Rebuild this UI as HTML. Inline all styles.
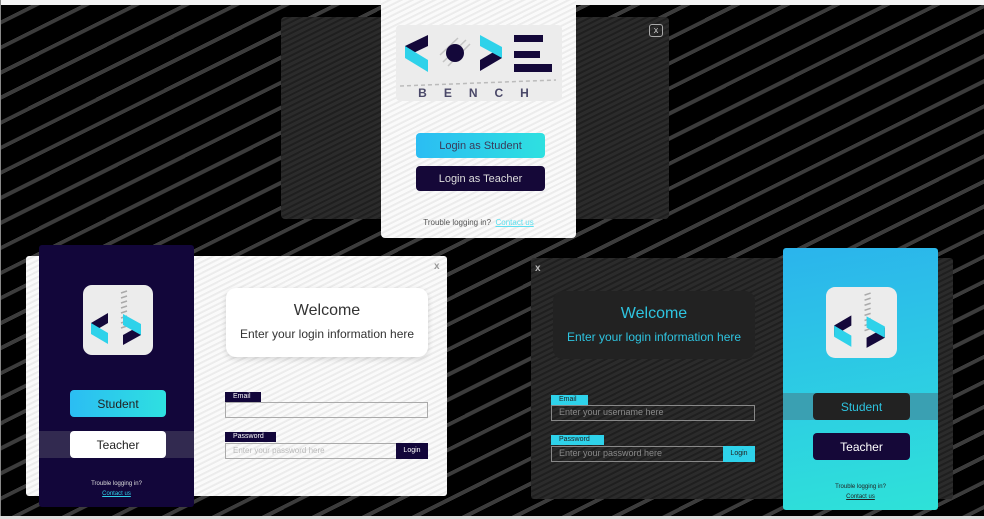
<!DOCTYPE html>
<html><head><meta charset="utf-8"><style>
*{margin:0;padding:0;box-sizing:border-box}
body{width:984px;height:519px;overflow:hidden;position:relative;font-family:"Liberation Sans",sans-serif;
background:repeating-linear-gradient(153.4deg,#000 0,#000 18.5px,#3c3c3c 18.5px,#3c3c3c 22.4px);}
.abs{position:absolute}
.dk{background:repeating-linear-gradient(153.4deg,#2b2b2b 0,#2b2b2b 3px,#1f1f1f 3px,#1f1f1f 5px)}
.wt{background:repeating-linear-gradient(153.4deg,#fafafa 0,#fafafa 3px,#ececec 3px,#ececec 5px)}
.btn{position:absolute;border-radius:4px;display:flex;align-items:center;justify-content:center;font-size:12px}
.c{text-align:center}
</style></head><body>
<div class="abs" style="left:0;top:0;width:984px;height:5px;background:#f4f4f4"></div>
<div class="abs" style="left:0;top:0;width:1px;height:519px;background:#888"></div>
<div class="abs" style="left:0;top:516px;width:984px;height:3px;background:#ddd"></div>

<!-- panel 1 -->
<div class="abs dk" style="left:281px;top:17px;width:388px;height:202px;border-radius:4px"></div>
<div class="abs" style="left:649px;top:24px;width:14px;height:13px;border:1px solid #aaa;border-radius:3px;color:#ccc;font-size:9px;text-align:center;line-height:11px">x</div>
<div class="abs wt" style="left:381px;top:0;width:195px;height:238px;border-radius:0 0 4px 4px"></div>
<svg class="abs" style="left:396px;top:25px" width="166" height="76" viewBox="396 25 166 76">
<rect x="396" y="25" width="166" height="76" rx="4" fill="#ececec"/>
<g stroke="#c4c4c4" stroke-width="1.5"><line x1="443" y1="62" x2="466" y2="40"/><line x1="448" y1="66" x2="470" y2="44"/><line x1="440" y1="55" x2="458" y2="38"/></g>
<polygon points="405,46 428,35 428,46 405,57" fill="#14083a"/>
<polygon points="405,46 428,60 428,72 405,58" fill="#2ed2ea"/>
<circle cx="455" cy="53" r="9" fill="#14083a"/>
<polygon points="480,60 502,47 502,58 480,71" fill="#14083a"/>
<polygon points="480,35 502,47 502,58 480,46" fill="#2ed2ea"/>
<rect x="514" y="35" width="29" height="7" fill="#14083a"/>
<rect x="514" y="51" width="26" height="7" fill="#14083a"/>
<rect x="514" y="64" width="38" height="8" fill="#14083a"/>
<g stroke="#bbb" stroke-width="1.5" stroke-dasharray="4 3"><line x1="400" y1="86" x2="556" y2="80"/></g>
<text x="482" y="97" text-anchor="middle" font-size="12" font-weight="bold" fill="#4a4868" letter-spacing="17" font-family="Liberation Sans">BENCH</text>
</svg>
<div class="btn" style="left:416px;top:133px;width:129px;height:25px;background:linear-gradient(90deg,#2bbdf3,#2ee0e0);color:#3a3a5a;font-size:11px">Login as Student</div>
<div class="btn" style="left:416px;top:166px;width:129px;height:25px;background:#150838;color:#ddd;font-size:11px">Login as Teacher</div>
<div class="abs" style="left:381px;top:218px;width:195px;font-size:8px;color:#555;text-align:center">Trouble logging in? &nbsp;<span style="color:#5ce0f0;text-decoration:underline">Contact us</span></div>

<!-- panel 2 -->
<div class="abs wt" style="left:26px;top:256px;width:421px;height:240px;border-radius:3px"></div>
<div class="abs" style="left:434px;top:261px;font-size:10px;color:#999;font-weight:bold">x</div>
<div class="abs" style="left:39px;top:245px;width:155px;height:262px;background:#12063a;border-radius:3px"></div>
<svg class="abs" style="left:83px;top:285px" width="70" height="70" viewBox="0 0 70 70">
<rect width="70" height="70" rx="9" fill="#ececec"/>
<g stroke="#aaa" stroke-width="1.5"><line x1="38" y1="8" x2="44" y2="6"/><line x1="38" y1="13" x2="44" y2="11"/><line x1="38" y1="18" x2="44" y2="16"/><line x1="38" y1="23" x2="44" y2="21"/><line x1="38" y1="28" x2="44" y2="26"/><line x1="38" y1="33" x2="44" y2="31"/><line x1="38" y1="38" x2="44" y2="36"/><line x1="38" y1="43" x2="44" y2="41"/></g>
<polygon points="8,38 25,28 25,38 8,48" fill="#14083a"/>
<polygon points="8,38 25,48 25,59 8,49" fill="#2ed2ea"/>
<polygon points="40,50 58,40 58,50 40,60" fill="#14083a"/>
<polygon points="40,29 58,39 58,50 40,40" fill="#2ed2ea"/>
</svg>
<div class="btn" style="left:70px;top:390px;width:96px;height:27px;background:linear-gradient(90deg,#2bbdf3,#2ee0e0);color:#222">Student</div>
<div class="abs" style="left:39px;top:431px;width:155px;height:27px;background:#322a50"></div>
<div class="btn" style="left:70px;top:431px;width:96px;height:27px;background:#fff;color:#222">Teacher</div>
<div class="abs c" style="left:39px;top:481px;width:155px;font-size:6px;color:#ddd">Trouble logging in?</div>
<div class="abs c" style="left:39px;top:491px;width:155px;font-size:6px;color:#2ed2ea;text-decoration:underline">Contact us</div>
<div class="abs c" style="left:226px;top:288px;width:202px;height:69px;background:#fff;border-radius:10px;box-shadow:0 2px 6px rgba(0,0,0,.15)">
<div style="font-size:16px;color:#333;margin-top:14px">Welcome</div>
<div style="font-size:12px;color:#333;margin-top:7px">Enter your login information here</div></div>
<div class="abs" style="left:225px;top:392px;width:36px;height:10px;background:#12063a;color:#fff;font-size:7px;padding-left:8px;line-height:10px">Email</div>
<div class="abs" style="left:225px;top:402px;width:203px;height:16px;border:1.5px solid #aaa"></div>
<div class="abs" style="left:225px;top:432px;width:51px;height:10px;background:#12063a;color:#fff;font-size:7px;padding-left:8px;line-height:10px">Password</div>
<div class="abs" style="left:225px;top:443px;width:172px;height:16px;border:1.5px solid #aaa;font-size:8px;color:#bbb;padding-left:7px;line-height:13px">Enter your password here</div>
<div class="abs c" style="left:396px;top:443px;width:32px;height:16px;background:#12063a;color:#fff;font-size:7px;line-height:16px">Login</div>

<!-- panel 3 -->
<div class="abs dk" style="left:531px;top:258px;width:422px;height:241px;border-radius:3px"></div>
<div class="abs" style="left:535px;top:263px;font-size:10px;color:#bbb;font-weight:bold">x</div>
<div class="abs c" style="left:553px;top:291px;width:202px;height:68px;background:#222;border-radius:10px">
<div style="font-size:16px;color:#2ec4e0;margin-top:14px">Welcome</div>
<div style="font-size:12px;color:#2ec4e0;margin-top:7px">Enter your login information here</div></div>
<div class="abs" style="left:551px;top:395px;width:37px;height:10px;background:#2ed2ea;color:#222;font-size:7px;padding-left:8px;line-height:10px">Email</div>
<div class="abs" style="left:551px;top:405px;width:204px;height:16px;border:1.5px solid #888;font-size:9px;color:#888;padding-left:7px;line-height:13px">Enter your username here</div>
<div class="abs" style="left:551px;top:435px;width:53px;height:10px;background:#2ed2ea;color:#222;font-size:7px;padding-left:8px;line-height:10px">Password</div>
<div class="abs" style="left:551px;top:446px;width:173px;height:16px;border:1.5px solid #888;font-size:9px;color:#888;padding-left:7px;line-height:13px">Enter your password here</div>
<div class="abs c" style="left:723px;top:446px;width:32px;height:16px;background:#2ed2ea;color:#222;font-size:7px;line-height:16px">Login</div>
<div class="abs" style="left:783px;top:248px;width:155px;height:262px;background:linear-gradient(170deg,#2bb4ec,#2dd0e2 60%,#2ee2d8);border-radius:3px"></div>
<svg class="abs" style="left:826px;top:287px" width="71" height="71" viewBox="0 0 70 70">
<rect width="70" height="70" rx="9" fill="#ececec"/>
<g stroke="#aaa" stroke-width="1.5"><line x1="38" y1="8" x2="44" y2="6"/><line x1="38" y1="13" x2="44" y2="11"/><line x1="38" y1="18" x2="44" y2="16"/><line x1="38" y1="23" x2="44" y2="21"/><line x1="38" y1="28" x2="44" y2="26"/><line x1="38" y1="33" x2="44" y2="31"/><line x1="38" y1="38" x2="44" y2="36"/><line x1="38" y1="43" x2="44" y2="41"/></g>
<polygon points="8,38 25,28 25,38 8,48" fill="#14083a"/>
<polygon points="8,38 25,48 25,59 8,49" fill="#2ed2ea"/>
<polygon points="40,50 58,40 58,50 40,60" fill="#14083a"/>
<polygon points="40,29 58,39 58,50 40,40" fill="#2ed2ea"/>
</svg>
<div class="abs" style="left:783px;top:393px;width:155px;height:27px;background:#3aa0b2"></div>
<div class="btn" style="left:813px;top:393px;width:97px;height:27px;background:#222;color:#2ec4e0">Student</div>
<div class="btn" style="left:813px;top:433px;width:97px;height:27px;background:#150838;color:#fff">Teacher</div>
<div class="abs c" style="left:783px;top:484px;width:155px;font-size:6px;color:#222">Trouble logging in?</div>
<div class="abs c" style="left:783px;top:494px;width:155px;font-size:6px;color:#222;text-decoration:underline">Contact us</div>
</body></html>
